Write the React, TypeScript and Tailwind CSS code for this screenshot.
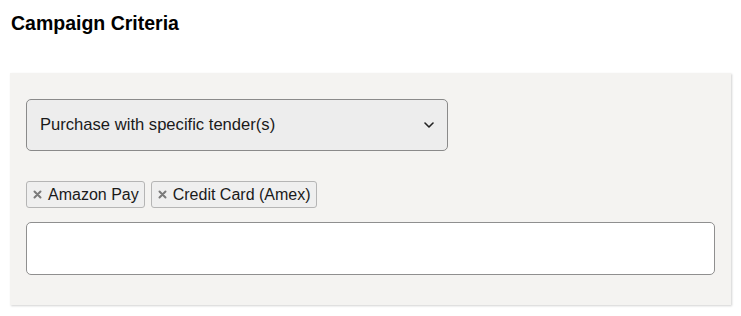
import React from "react";

function Tag({ label }: { label: string }) {
  return (
    <span className="flex h-[27px] items-center gap-[6px] rounded-[3px] border border-[#b5b5b5] bg-[#efefef] pl-[6px] pr-[5px] text-[16px] text-[#1a1a1a]">
      <svg width="9" height="9" viewBox="0 0 9 9" className="shrink-0">
        <path d="M1.5 1.5 L7.5 7.5 M7.5 1.5 L1.5 7.5" stroke="#7a7a7a" strokeWidth="2" strokeLinecap="round" />
      </svg>
      {label}
    </span>
  );
}

export default function App() {
  return (
    <div className="min-h-[316px] bg-white font-['Liberation_Sans',Arial,sans-serif]">
      <h1 className="pl-[11px] pt-[11px] text-[19.5px] font-bold leading-[24px] text-black">Campaign Criteria</h1>
      <div className="mx-[10px] mt-[38px] w-[721px] bg-[#f4f3f1] px-[16px] pb-[30px] pt-[26px] shadow-[1px_1px_2px_rgba(0,0,0,0.18)]">
        <div className="flex h-[52px] w-[422px] items-center justify-between rounded-[5px] border border-[#8a8a8a] bg-[#ededed] pl-[13px] pr-[13px] text-[16.6px] text-[#1a1a1a]">
          <span>Purchase with specific tender(s)</span>
          <svg width="10" height="6" viewBox="0 0 10 6">
            <path d="M1 1 L5 5 L9 1" stroke="#222" strokeWidth="1.6" fill="none" strokeLinecap="round" strokeLinejoin="round" />
          </svg>
        </div>
        <div className="mt-[30px] flex gap-[6px]">
          <Tag label="Amazon Pay" />
          <Tag label="Credit Card (Amex)" />
        </div>
        <div className="mt-[14px] h-[53px] w-[689px] rounded-[5px] border border-[#8f8f8f] bg-white" />
      </div>
    </div>
  );
}
